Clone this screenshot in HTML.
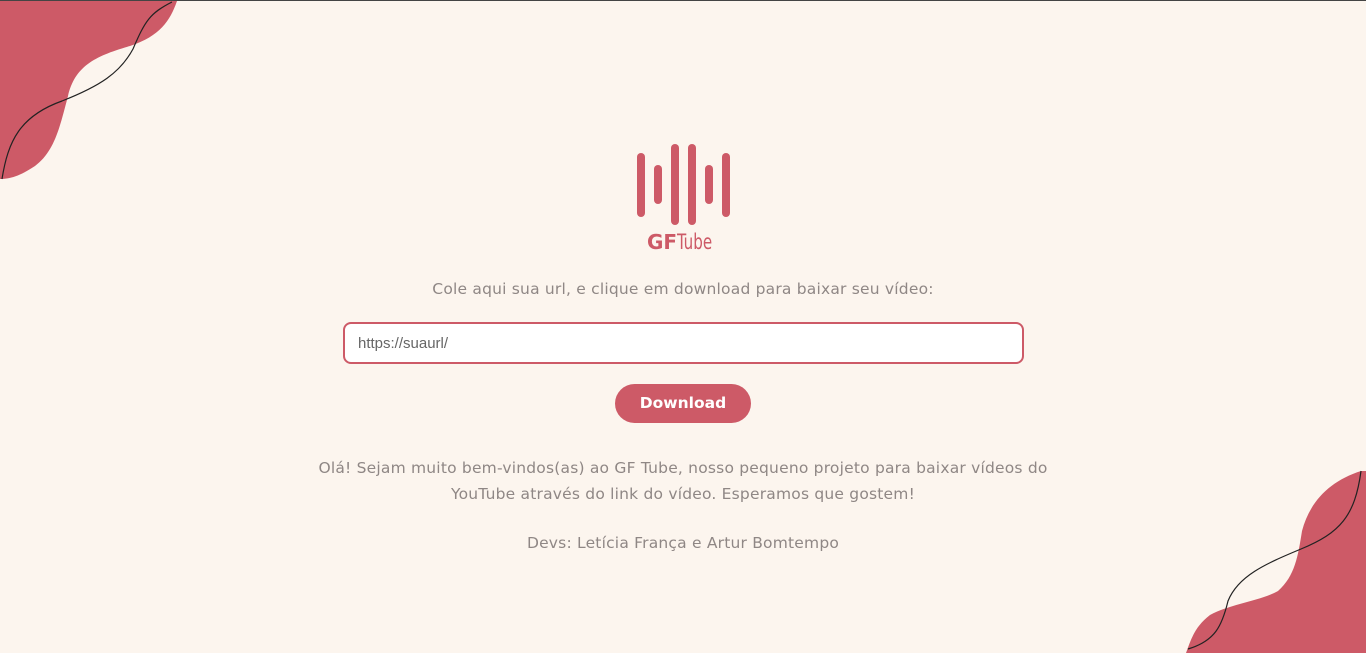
<!DOCTYPE html>
<html><head><meta charset="utf-8"><style>
html,body{margin:0;padding:0}
body{width:1366px;height:652px;background:#fcf5ee;position:relative;overflow:hidden;font-family:"Liberation Sans",sans-serif;border-top:1px solid #444;box-sizing:border-box}
svg.bg{position:absolute;left:0;top:0}
.bar{position:absolute;width:8px;background:#cd5a67;border-radius:4px}
.t{position:absolute;left:0;width:1366px;text-align:center;color:#8f8785;font-size:15.5px;font-family:"DejaVu Sans",sans-serif;letter-spacing:0.2px}
input{position:absolute;left:343px;top:321px;width:681px;height:42px;box-sizing:border-box;border:2px solid #cd5a67;border-radius:8px;background:#fff;padding:0 13px;font-size:15px;color:#666;font-family:"Liberation Sans",sans-serif}
.btn{position:absolute;left:615px;top:383px;width:136px;height:39px;border-radius:20px;background:#cd5a67;color:#fff;font-size:15.5px;font-weight:bold;text-align:center;line-height:39px;font-family:"DejaVu Sans",sans-serif}
</style></head><body>
<svg class="bg" width="1366" height="652">
<path d="M0 0 L177 0 C170 20 160 35 130 45 C95 55 75 65 68 95 C60 125 55 150 35 165 C20 175 10 178 0 178 Z" fill="#cd5a67"/>
<path d="M2 178 C8 140 20 115 62 100 C100 85 120 72 133 48 C145 20 150 12 172 1" fill="none" stroke="#222" stroke-width="1.2"/>
<path d="M1366 470 L1366 652 L1186 652 C1192 635 1196 625 1210 614 C1230 603 1260 600 1278 590 C1295 575 1298 555 1302 530 C1310 500 1330 480 1361 470 Z" fill="#cd5a67"/>
<path d="M1188 648 C1215 640 1222 625 1228 600 C1238 575 1265 563 1301 548 C1340 532 1355 515 1361 470" fill="none" stroke="#222" stroke-width="1.2"/>
</svg>
<div class="bar" style="left:637px;top:152px;height:64px"></div>
<div class="bar" style="left:654px;top:164px;height:39px"></div>
<div class="bar" style="left:671px;top:143px;height:81px"></div>
<div class="bar" style="left:688px;top:143px;height:81px"></div>
<div class="bar" style="left:705px;top:164px;height:39px"></div>
<div class="bar" style="left:722px;top:152px;height:64px"></div>
<div style="position:absolute;left:647px;top:229px;color:#cd5a67;font-size:21px;line-height:24px;white-space:nowrap"><b style="font-weight:900;font-family:'DejaVu Sans',sans-serif;font-size:20px">GF</b><span style="font-family:'DejaVu Sans Condensed','Liberation Sans Narrow',sans-serif;font-size:21px;display:inline-block;transform:scaleX(0.8);transform-origin:left">Tube</span></div>
<div class="t" style="top:279px">Cole aqui sua url, e clique em download para baixar seu vídeo:</div>
<input value="https://suaurl/">
<div class="btn">Download</div>
<div class="t" style="top:454px;line-height:26px">Olá! Sejam muito bem-vindos(as) ao GF Tube, nosso pequeno projeto para baixar vídeos do<br>YouTube através do link do vídeo. Esperamos que gostem!</div>
<div class="t" style="top:533px">Devs: Letícia França e Artur Bomtempo</div>
</body></html>
